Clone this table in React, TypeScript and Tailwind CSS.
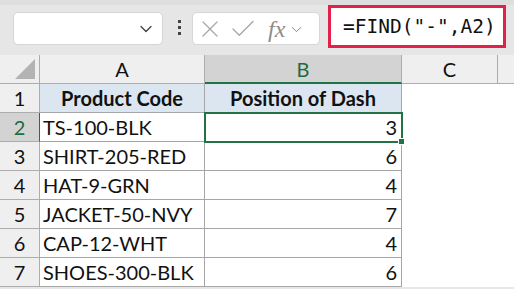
import { ChevronDown, X, Check } from "lucide-react"

const rows = [
  { code: "TS-100-BLK", pos: 3 },
  { code: "SHIRT-205-RED", pos: 6 },
  { code: "HAT-9-GRN", pos: 4 },
  { code: "JACKET-50-NVY", pos: 7 },
  { code: "CAP-12-WHT", pos: 4 },
  { code: "SHOES-300-BLK", pos: 6 },
]

const cellFont = { fontFamily: "Lato, 'Noto Sans', sans-serif" }

export default function App() {
  return (
    <div className="w-[514px] h-[289px] overflow-hidden bg-[#e6e6e6] text-[#111]" style={cellFont}>
      {/* Formula bar */}
      <div className="h-[55px] flex items-start relative">
        <div className="absolute top-0 left-0 right-0 h-[5px] bg-[#dedede]" />
        <div className="mt-[12px] ml-[13px] w-[150px] h-[33px] bg-white rounded-[5px] border border-[#d6d6d6] flex items-center justify-end pr-[6px]">
          <ChevronDown size={20} strokeWidth={1.6} className="text-[#444]" />
        </div>
        <div className="mt-[20px] ml-[13px] w-[6px] flex flex-col items-center gap-[3px]">
          <div className="w-[3px] h-[3px] bg-[#444]" />
          <div className="w-[3px] h-[3px] bg-[#444]" />
          <div className="w-[3px] h-[3px] bg-[#444]" />
        </div>
        <div className="mt-[12px] ml-[10px] w-[128px] h-[33px] bg-white rounded-[5px] border border-[#d6d6d6] flex items-center pl-[3px]">
          <X size={28} strokeWidth={1.1} className="text-[#a8a8a8]" />
          <Check size={30} strokeWidth={1.1} className="text-[#a8a8a8] ml-[4px]" />
          <span
            className="ml-[10px] text-[24px] italic text-[#8c8c8c] leading-none"
            style={{ fontFamily: "'Liberation Serif', serif" }}
          >
            fx
          </span>
          <ChevronDown size={17} strokeWidth={1.4} className="text-[#888] ml-[3px] mt-[2px]" />
        </div>
        <div className="mt-[5px] ml-[8px] w-[178px] h-[43px] bg-white border-[3px] border-[#e3204a] flex items-center pl-[12px]">
          <span
            className="text-[19.5px] text-[#111] leading-none"
            style={{ fontFamily: "'DejaVu Sans Mono', 'Liberation Mono', monospace" }}
          >
            =FIND("-",A2)
          </span>
        </div>
      </div>

      {/* Grid */}
      <div className="grid grid-cols-[40px_165px_197px_96px_1fr] grid-rows-[29px_repeat(7,29px)] bg-white text-[20px]">
        {/* column headers */}
        <div className="bg-[#efefef] border-r border-b border-[#adadad] relative">
          <div
            className="absolute right-[4px] bottom-[4px] w-[20px] h-[20px] bg-[#b3b3b3]"
            style={{ clipPath: "polygon(100% 0, 100% 100%, 0 100%)" }}
          />
        </div>
        <div className="bg-[#efefef] border-r border-b border-[#adadad] flex items-center justify-center">A</div>
        <div className="bg-[#d3d3d3] border-r border-[#adadad] border-b-2 border-b-[#217346] flex items-center justify-center text-[#1d6b40]">B</div>
        <div className="bg-[#efefef] border-r border-b border-[#adadad] flex items-center justify-center">C</div>
        <div className="bg-[#efefef] border-b border-[#adadad]" />

        {/* row 1 */}
        <div className="bg-[#efefef] border-r border-b border-[#adadad] flex items-center justify-center">1</div>
        <div className="bg-[#dce6f1] border-r border-b border-[#a6a6a6] flex items-center justify-center font-bold">Product Code</div>
        <div className="bg-[#dce6f1] border-r border-b border-[#a6a6a6] flex items-center justify-center font-bold">Position of Dash</div>
        <div />
        <div />

        {rows.map((r, i) => {
          const n = i + 2
          const sel = n === 2
          return [
            <div
              key={`h${n}`}
              className={`border-r border-b border-[#adadad] flex items-center justify-center ${
                sel ? "bg-[#d3d3d3] text-[#1d6b40] border-r-[#217346]" : "bg-[#efefef]"
              }`}
            >
              {n}
            </div>,
            <div key={`a${n}`} className="border-r border-b border-[#a6a6a6] flex items-center pl-[3px]">
              {r.code}
            </div>,
            <div
              key={`b${n}`}
              className={`border-r border-b border-[#a6a6a6] flex items-center justify-end pr-[4px] relative ${
                sel ? "outline-2 outline-[#217346] -outline-offset-1 z-10" : ""
              }`}
            >
              {r.pos}
              {sel && <div className="absolute -right-[4px] -bottom-[4px] w-[7px] h-[7px] bg-[#217346] border border-white" />}
            </div>,
            <div key={`c${n}`} />,
            <div key={`d${n}`} />,
          ]
        })}
      </div>
    </div>
  )
}
